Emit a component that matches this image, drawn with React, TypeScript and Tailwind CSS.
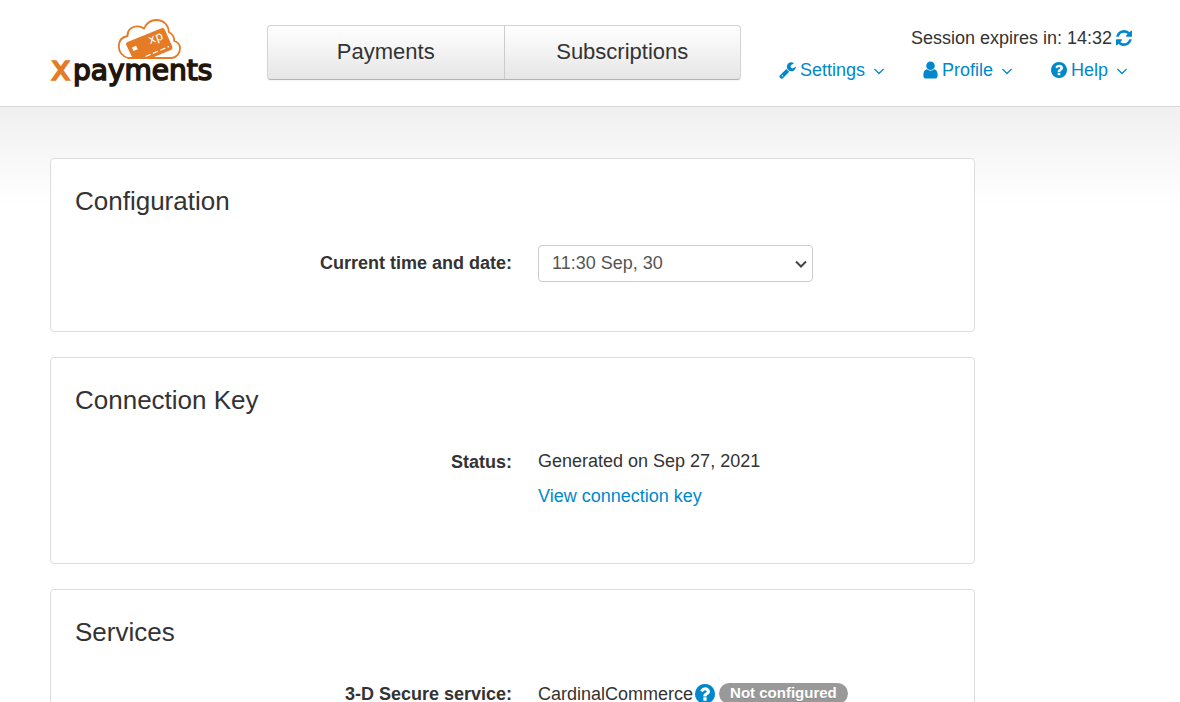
import React, { useState } from 'react';

interface IconProps {
  className?: string;
}

const WrenchIcon: React.FC<IconProps> = ({ className }) => (
  <svg viewBox="64 0 1664 1792" fill="currentColor" className={className} aria-hidden="true">
    <path d="M448 1472q0-26-19-45t-45-19-45 19-19 45 19 45 45 19 45-19 19-45zm644-420l-682 682q-37 37-90 37-52 0-91-37l-106-108q-38-36-38-90 0-53 38-91l681-681q39 98 114.500 173.500t173.500 114.500zm634-435q0 39-23 106-47 134-164.500 217.500t-258.500 83.500q-185 0-316.500-131.500t-131.500-316.500 131.500-316.500 316.500-131.500q58 0 121.500 16.500t107.500 46.500q16 11 16 28t-16 28l-293 169v224l193 107q5-3 79-48.500t135.500-81 70.500-35.500q15 0 23.500 10t8.500 25z" />
  </svg>
);

const UserIcon: React.FC<IconProps> = ({ className }) => (
  <svg viewBox="256 0 1280 1792" fill="currentColor" className={className} aria-hidden="true">
    <path d="M1536 1399q0 109-62.500 187t-150.500 78h-854q-88 0-150.500-78t-62.500-187q0-85 8.500-160.500t31.500-152 58.500-131 94-89 134.500-34.500q131 128 313 128t313-128q76 0 134.500 34.500t94 89 58.500 131 31.500 152 8.500 160.500zm-256-887q0 159-112.500 271.500t-271.500 112.500-271.500-112.500-112.500-271.500 112.500-271.500 271.500-112.500 271.500 112.500 112.500 271.500z" />
  </svg>
);

const QuestionIcon: React.FC<IconProps> = ({ className }) => (
  <svg viewBox="128 128 1536 1536" fill="currentColor" className={className} aria-hidden="true">
    <path d="M1024 1376v-192q0-14-9-23t-23-9h-192q-14 0-23 9t-9 23v192q0 14 9 23t23 9h192q14 0 23-9t9-23zm256-672q0-88-55.500-163t-138.500-116-170-41q-243 0-371 213-15 24 8 42l132 100q7 6 19 6 16 0 25-12 53-68 86-92 34-24 86-24 48 0 85.500 26t37.500 59q0 38-20 61t-68 45q-63 28-115.500 86.500t-52.500 125.500v36q0 14 9 23t23 9h192q14 0 23-9t9-23q0-19 21.500-49.500t54.500-49.500q32-18 49-28.500t46-35 44.500-48 28-60.500 12.500-81zm384 192q0 209-103 385.500t-279.500 279.500-385.500 103-385.500-103-279.500-279.500-103-385.500 103-385.500 279.500-279.500 385.500-103 385.500 103 279.500 279.500 103 385.500z" />
  </svg>
);

const RefreshIcon: React.FC<IconProps> = ({ className }) => (
  <svg viewBox="128 128 1536 1536" fill="currentColor" className={className} aria-hidden="true">
    <path d="M1639 1056q0 5-1 7-64 268-268 434.500t-478 166.500q-146 0-282.500-55t-243.500-157l-129 129q-19 19-45 19t-45-19-19-45v-448q0-26 19-45t45-19h448q26 0 45 19t19 45-19 45l-137 137q71 66 161 102t187 36q134 0 250-65t186-179q11-17 53-117 8-23 30-23h192q13 0 22.500 9.500t9.500 22.500zm25-800v448q0 26-19 45t-45 19h-448q-26 0-45-19t-19-45 19-45l138-138q-148-137-349-137-134 0-250 65t-186 179q-11 17-53 117-8 23-30 23h-199q-13 0-22.500-9.500t-9.500-22.500v-7q65-268 270-434.500t480-166.500q146 0 284 55.500t245 156.500l130-129q19-19 45-19t45 19 19 45z" />
  </svg>
);

const AngleDownIcon: React.FC<IconProps> = ({ className }) => (
  <svg viewBox="320 0 1152 1792" fill="currentColor" className={className} aria-hidden="true">
    <path d="M1395 736q0 13-10 23l-466 466q-10 10-23 10t-23-10l-466-466q-10-10-10-23t10-23l50-50q10-10 23-10t23 10l393 393 393-393q10-10 23-10t23 10l50 50q10 10 10 23z" />
  </svg>
);

const Logo = () => (
  <svg viewBox="0 0 164 72" className="w-[164px] h-[72px]" role="img" aria-label="xpayments">
    <path
      d="M78 41C72 39.5 68.8 34.5 68.8 29.5C68.8 24 72 20 77.5 19C77 13 82 9.3 87 9.3C90 9.3 92 10 94 11.5C96.5 6 101 3 106.5 3C113.5 3 118.5 8 118.8 15C122.5 17 124.5 20 124.3 24C128 25 130 28 130 31.5C130 36 127 40.3 122 41Z"
      fill="#fff"
      stroke="#e57b25"
      strokeWidth="1.8"
    />
    <path
      d="M77.5 25L111.5 11.3Q114 10.500 115 13L122.3 29.5Q123 32 121 33L104 40H82L76 27.5Q75.5 26 77.5 25Z"
      fill="#e57b25"
    />
    <path d="M81.8 30.5L86 28.8L87.8 32.2L83.5 34Z" fill="#fff" />
    <path d="M95.5 39.5L119 29.5" stroke="#fff" strokeWidth="1.2" strokeDasharray="5.5 2.5" />
    <text x="100" y="27" transform="rotate(-20 100 27)" fill="#fff" fontSize="12" fontFamily="'DejaVu Sans', sans-serif">
      xp
    </text>
    <text y="63" fontSize="28" strokeWidth="1.6" fontFamily="'DejaVu Sans', sans-serif">
      <tspan x="1" fontSize="33" fill="#e57b25" stroke="#e57b25">x</tspan>
      <tspan x="23" fill="#22160a" stroke="#22160a">payments</tspan>
    </text>
  </svg>
);

interface MenuButtonProps {
  label: string;
  icon: React.ReactNode;
}

const MenuButton: React.FC<MenuButtonProps> = ({ label, icon }) => (
  <button type="button" className="flex items-center text-[#0088cc] hover:text-[#005580] cursor-pointer">
    {icon}
    <span className="ml-1">{label}</span>
    <AngleDownIcon className="w-3 h-[18px] ml-2 mt-0.5" />
  </button>
);

interface PanelProps {
  title: string;
  children: React.ReactNode;
}

const Panel: React.FC<PanelProps> = ({ title, children }) => (
  <section className="bg-white border border-[#dddddd] rounded px-6 pt-6 pb-[49px]">
    <h2 className="text-[26px] leading-9 mb-[26px]">{title}</h2>
    {children}
  </section>
);

const rowClass = 'grid grid-cols-[437px_1fr] gap-x-[26px]';
const labelClass = 'text-right font-bold leading-9';

export default function App() {
  const [time, setTime] = useState('11:30 Sep, 30');

  return (
    <div className="min-h-screen bg-white text-lg text-[#333333] font-['Liberation_Sans',Arial,sans-serif]">
      <header className="flex items-start h-[107px] pl-[50px] pr-12 border-b border-[#d9d9d9]">
        <a href="#home" className="mt-[17px] shrink-0">
          <Logo />
        </a>
        <nav className="flex w-[474px] h-[55px] mt-[25px] ml-[53px] rounded border border-[#d4d4d4] border-b-[#b3b3b3] bg-linear-to-b from-white to-[#e6e6e6] shadow-xs text-[22px]">
          <a href="#payments" className="flex flex-1 items-center justify-center border-r border-[#cccccc]">
            Payments
          </a>
          <a href="#subscriptions" className="flex flex-1 items-center justify-center">
            Subscriptions
          </a>
        </nav>
        <div className="ml-auto mt-[22px]">
          <div className="flex h-8 items-center justify-end gap-1">
            <span>Session expires in: 14:32</span>
            <button type="button" aria-label="Refresh session" className="text-[#0088cc] cursor-pointer">
              <RefreshIcon className="w-4 h-4" />
            </button>
          </div>
          <div className="flex h-8 items-center gap-[38px] pr-1">
            <MenuButton label="Settings" icon={<WrenchIcon className="w-[17px] h-[18px]" />} />
            <MenuButton label="Profile" icon={<UserIcon className="w-[15px] h-5" />} />
            <MenuButton label="Help" icon={<QuestionIcon className="w-4 h-4" />} />
          </div>
        </div>
      </header>

      <main className="px-[50px] pt-[51px] bg-[linear-gradient(to_bottom,#f0f0f0,#ffffff_100px)]">
        <div className="flex flex-col gap-[25px] max-w-[925px]">
          <Panel title="Configuration">
            <div className={rowClass}>
              <label htmlFor="time" className={labelClass}>
                Current time and date:
              </label>
              <div className="relative w-[275px]">
                <select
                  id="time"
                  value={time}
                  onChange={(e) => setTime(e.target.value)}
                  className="block appearance-none w-full h-[37px] px-[13px] pb-0.5 bg-white border border-[#cccccc] rounded text-[#555555]"
                >
                  <option>11:30 Sep, 30</option>
                  <option>12:30 Sep, 30</option>
                </select>
                <svg viewBox="0 0 12 8" fill="none" className="absolute right-[6px] top-[15px] w-3 h-2 pointer-events-none">
                  <path d="M1 1.5L6 6.5L11 1.5" stroke="#444444" strokeWidth="2" />
                </svg>
              </div>
            </div>
          </Panel>

          <Panel title="Connection Key">
            <div className={rowClass}>
              <div className={labelClass}>Status:</div>
              <div className="leading-[35px]">
                <p>Generated on Sep 27, 2021</p>
                <p>
                  <a href="#connection-key" className="text-[#0088cc] hover:underline">View connection key</a>
                </p>
              </div>
            </div>
          </Panel>

          <Panel title="Services">
            <div className={rowClass}>
              <div className={labelClass}>3-D Secure service:</div>
              <div className="flex h-[35px] items-center">
                <span>CardinalCommerce</span>
                <button type="button" aria-label="About 3-D Secure" className="ml-0.5 text-[#0088cc] cursor-pointer">
                  <QuestionIcon className="w-5 h-5" />
                </button>
                <span className="ml-1 px-[11px] h-[21px] leading-[19px] rounded-full bg-[#999999] text-white text-[15px] font-bold text-shadow-2xs">
                  Not configured
                </span>
              </div>
            </div>
          </Panel>
        </div>
      </main>
    </div>
  );
}
